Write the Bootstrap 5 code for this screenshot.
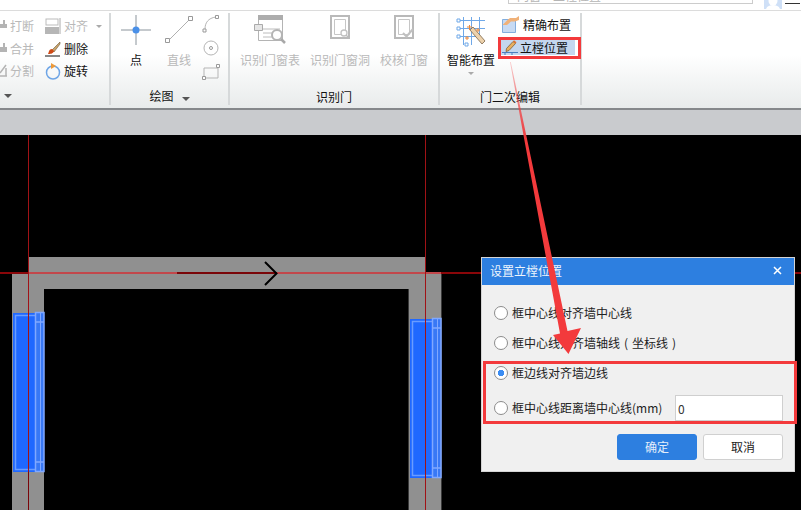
<!DOCTYPE html>
<html lang="zh-CN">
<head>
    <meta charset="UTF-8">
    <meta name="viewport" content="width=device-width, initial-scale=1.0">
    <title>设置立樘位置</title>

    <!-- Bootstrap CSS -->
    <link href="https://cdn.jsdelivr.net/npm/bootstrap@5.3.2/dist/css/bootstrap.min.css" rel="stylesheet">

    <style>
        body {
            background-color: #000;
            font-family: "Noto Sans CJK SC", "Liberation Sans", sans-serif;
            font-size: 12px;
            line-height: 16px;
            color: #111;
        }

        svg {
            display: block;
        }

        #page {
            width: 801px;
            height: 510px;
            overflow: hidden;
        }

        /* top strip */
        .top-strip {
            height: 11px;
            background-color: #fff;
            border-bottom: 1px solid #dcdcdc;
            overflow: hidden;
        }

        .search-box {
            width: 245px;
            height: 4px;
            margin-left: 508px;
            padding-left: 8px;
            border: 1px solid #ccc;
            border-top: 0;
            overflow: hidden;
            color: #b5b5b5;
        }

        .search-box span {
            display: block;
            margin-top: -12px;
        }

        .top-user {
            margin-left: 11px;
        }

        .top-dash {
            width: 15px;
            height: 1px;
            margin: 3px 0 0 3px;
            background-color: #333;
        }

        /* ribbon */
        .ribbon {
            height: 97px;
            background: linear-gradient(#fff 45%, #e8ebeb 100%);
        }

        .rb-group {
            height: 92px;
            margin-top: 2px;
            border-right: 2px solid #d6d9da;
            flex: none;
        }

        .rb-g1 { width: 111px; }
        .rb-g2 { width: 119px; }
        .rb-g3 { width: 210px; }
        .rb-g4 { width: 142px; }

        .rb-body {
            height: 76px;
            padding-top: 2px;
        }

        .rb-label {
            height: 16px;
            line-height: 16px;
            text-align: center;
        }

        .rb-g1 .rb-label,
        .rb-g2 .rb-label {
            margin-top: -1px;
        }

        .rb-large {
            text-align: center;
            flex: none;
        }

        .rb-large svg {
            margin: 0 auto;
        }

        .rb-large .rb-icon {
            height: 33px;
            margin-bottom: 4px;
        }

        .rb-small {
            height: 22.5px;
            white-space: nowrap;
        }

        .rb-small .rb-text {
            margin-left: 3px;
        }

        .rb-off {
            color: #b9b9b9;
        }

        .rb-caret {
            width: 0;
            height: 0;
            border-left: 4px solid transparent;
            border-right: 4px solid transparent;
            border-top: 4px solid #555;
            display: inline-block;
        }

        .caret-sm {
            border-left-width: 3px;
            border-right-width: 3px;
            border-top: 3px solid #aaa;
        }

        .col-cut { width: 45px; flex: none; }
        .col-cut svg { width: 7px; }

        .g2-pt { width: 50px; }
        .g2-line { width: 36px; }
        .g2-small { margin-left: 1px; width: 26px; }
        .g2-small svg { margin: 0 auto 6px; }

        .g3-body { padding-left: 10px; gap: 10px; }
        .g3-wide { width: 60px; }
        .g3-narrow { width: 48px; }

        .g4-body { padding-left: 7px; }
        .g4-smart { width: 48px; }
        .g4-side { margin-left: 5px; padding-top: 1px; }

        .side-row {
            padding-left: 2px;
            gap: 4px;
        }

        .loc-active {
            width: 75px;
            height: 15px;
            margin-top: 7px;
            padding-left: 2px;
            gap: 2px;
            background-color: #c4d7ef;
        }

        .gray-strip {
            height: 27px;
            background-color: #c9cbce;
            border-top: 2px solid #85888b;
        }

        /* overlays */
        .dlg {
            left: 481px;
            top: 257px;
            width: 314px;
            height: 215px;
            border: 1px solid #d4d4d4;
            border-radius: 0;
            background-color: #f0f0f0;
        }

        .dlg .card-header {
            height: 27px;
            padding: 0 8px 2px;
            background-color: #2d7fe0;
            border: 0;
            border-radius: 0;
            color: #eef5fd;
        }

        .dlg .card-body {
            padding: 13px 11px 11px 12px;
        }

        .dlg-row {
            height: 30px;
            gap: 4px;
        }

        .dlg-row .form-check-input {
            width: 14px;
            height: 14px;
            margin: 0;
            flex: none;
            background-color: #fff;
            border: 1px solid #8c8c8c;
        }

        .dlg-row .form-check-input:checked {
            background-image: radial-gradient(circle, #3b8cf2 0 3px, transparent 3.5px);
            background-color: #fff;
            border-color: #8c8c8c;
        }

        .dlg-row .form-check-label {
            color: #222;
        }

        /* brackets sit centred in a full character cell */
        .paren-mid {
            display: inline-block;
            width: 12px;
            text-align: center;
        }

        .dlg-gap {
            margin-top: 5px;
        }

        .dlg-input {
            width: 108px;
            height: 26px;
            min-height: 0;
            padding: 0 2px;
            border: 1px solid #cfcfcf;
            border-radius: 0;
            font-size: 12px;
            color: #333;
        }

        .dlg-foot {
            margin-top: 11px;
            gap: 6px;
        }

        .dlg-btn {
            width: 80px;
            height: 26px;
            padding: 0;
            font-size: 12px;
            line-height: 24px;
            border-radius: 3px;
        }

        .dlg-ok {
            background-color: #2d7fe0;
            border: 1px solid #2d7fe0;
            color: #e3eefb;
        }

        .dlg-cancel {
            background-color: #fff;
            border: 1px solid #d0d0d0;
            color: #222;
        }

        .mark-box {
            border: 3px solid #f33a3c;
        }

        .mark-top {
            left: 498px;
            top: 37px;
            width: 83px;
            height: 22px;
        }

        .mark-dlg {
            left: 483px;
            top: 361px;
            width: 314px;
            height: 63px;
        }

        .arrow-layer {
            left: 0;
            top: 0;
        }
    </style>
</head>
<body>
<div id="page" class="position-relative">

    <div class="top-strip d-flex">
        <div class="search-box"><span>门窗·立樘位置</span></div>
        <svg class="top-user" width="18" height="9" viewBox="0 0 18 9"><rect width="18" height="9" fill="#cfe0f7"/><circle cx="9" cy="1" r="4.5" fill="#fff"/><path d="M2 9c1-3 4-4 7-4s6 1 7 4z" fill="#fff"/></svg>
        <div class="top-dash"></div>
    </div>

    <div class="ribbon d-flex">
        <!-- group 1, cut off on the left -->
        <div class="rb-group rb-g1">
            <div class="rb-body d-flex">
                <div class="col-cut">
                    <div class="rb-small d-flex align-items-center rb-off">
                        <svg height="12" viewBox="0 0 7 12"><path d="M3 0h2v4h2v4H0V4h3z" fill="#b4b4b4"/></svg><span class="rb-text">打断</span>
                    </div>
                    <div class="rb-small d-flex align-items-center rb-off">
                        <svg height="12" viewBox="0 0 7 12"><path d="M3 0h2v4h2v5H0V4h3z" fill="#b4b4b4"/></svg><span class="rb-text">合并</span>
                    </div>
                    <div class="rb-small d-flex align-items-center rb-off">
                        <svg height="14" viewBox="0 0 7 14"><path d="M0 9 6 1M0 12h7M6 4v8" fill="none" stroke="#b4b4b4" stroke-width="1.5"/></svg><span class="rb-text">分割</span>
                    </div>
                </div>
                <div>
                    <div class="rb-small d-flex align-items-center rb-off">
                        <svg width="16" height="16" viewBox="0 0 16 16"><rect x="1" y="1" width="12" height="6" fill="#fff" stroke="#bbb"/><rect y="9" width="14" height="7" fill="#b6b6b6"/><path d="M15 0v16" stroke="#aaa"/></svg>
                        <span class="rb-text">对齐</span><i class="rb-caret caret-sm ms-2"></i>
                    </div>
                    <div class="rb-small d-flex align-items-center">
                        <svg width="16" height="16" viewBox="0 0 16 16"><path d="M15 1 7 9l2 2 6-8z" fill="#c9a46c" stroke="#6e5a3a" stroke-width=".6"/><path d="M7 8c-3 0-3 3-4 5 2 0 5 0 6-3z" fill="#cf4a16"/><path d="M0 15h15" stroke="#111"/></svg>
                        <span class="rb-text">删除</span>
                    </div>
                    <div class="rb-small d-flex align-items-center">
                        <svg width="16" height="17" viewBox="0 0 16 17"><circle cx="8" cy="9.500" r="6.500" fill="none" stroke="#6ea5e6" stroke-width="1.500"/><path d="M6 0l5 3-5 3z" fill="#ee9a3a"/></svg>
                        <span class="rb-text">旋转</span>
                    </div>
                </div>
            </div>
            <div class="rb-label d-flex ps-1 align-items-center"><i class="rb-caret"></i></div>
        </div>

        <!-- group 2 -->
        <div class="rb-group rb-g2">
            <div class="rb-body d-flex">
                <div class="rb-large g2-pt">
                    <div class="rb-icon">
                        <svg width="30" height="30" viewBox="0 0 30 30"><path d="M15 0v30M0 15h30" stroke="#8b949c"/><circle cx="15" cy="15" r="3.500" fill="#4a90e8"/></svg>
                    </div>
                    <div>点</div>
                </div>
                <div class="rb-large g2-line rb-off">
                    <div class="rb-icon">
                        <svg width="30" height="30" viewBox="0 0 30 30"><path d="M4 26 26 4" stroke="#b0b0b0"/><path d="M1.500 23.500h4v4h-4zM24.500 1.500h4v4h-4z" fill="#fff" stroke="#999"/></svg>
                    </div>
                    <div>直线</div>
                </div>
                <div class="g2-small">
                    <svg width="18" height="18" viewBox="0 0 18 18"><path d="M3 14C3 8 6 3 14 2" fill="none" stroke="#b5b5b5"/><path d="M1 14h3v3H1zM13.500 .5h3v3h-3z" fill="#fff" stroke="#999"/></svg>
                    <svg width="18" height="18" viewBox="0 0 18 18"><circle cx="9" cy="9" r="7" fill="none" stroke="#b5b5b5"/><circle cx="9" cy="9" r="1.500" fill="#fff" stroke="#999"/></svg>
                    <svg width="18" height="18" viewBox="0 0 18 18"><path d="M2 5h14v10H2z" fill="none" stroke="#b5b5b5"/><path d="M.5 13.500h3v3h-3zM14.500 1.500h3v3h-3z" fill="#fff" stroke="#999"/></svg>
                </div>
            </div>
            <div class="rb-label">绘图<i class="rb-caret ms-2"></i></div>
        </div>

        <!-- group 3 -->
        <div class="rb-group rb-g3">
            <div class="rb-body g3-body d-flex">
                <div class="rb-large g3-wide rb-off">
                    <div class="rb-icon">
                        <svg width="32" height="30" viewBox="0 0 32 30"><path d="M4.500 4.500h24v21h-24z" fill="#fff" stroke="#b4b4b4"/><path d="M4 0h25v5H4z" fill="#adadad"/><path d="M9 14h17M9 18h10M9 22h9" stroke="#bcbcbc"/><path d="M.5 9.500h8v6h-8z" fill="#e6e6e6" stroke="#aaa"/><circle cx="23" cy="20" r="5" fill="#fff" stroke="#b4b4b4" stroke-width="2"/><path d="m27 24 4 4" stroke="#a8a8a8" stroke-width="2.500"/></svg>
                    </div>
                    <div>识别门窗表</div>
                </div>
                <div class="rb-large g3-wide rb-off">
                    <div class="rb-icon">
                        <svg width="20" height="24" viewBox="0 0 20 24"><path d="M1 1h18v22H1z" fill="#fff" stroke="#b9b9b9" stroke-width="2"/><path d="M4.500 4.500h11v15h-11z" fill="none" stroke="#c6c6c6"/><circle cx="14" cy="18" r="3" fill="#fff" stroke="#c2c2c2" stroke-width="1.300"/><path d="m16 20 2 2" stroke="#bdbdbd" stroke-width="1.500"/></svg>
                    </div>
                    <div>识别门窗洞</div>
                </div>
                <div class="rb-large g3-narrow rb-off">
                    <div class="rb-icon">
                        <svg width="20" height="24" viewBox="0 0 20 24"><path d="M1 1h18v22H1z" fill="#fff" stroke="#b9b9b9" stroke-width="2"/><path d="M4.500 4.500h11v15h-11z" fill="none" stroke="#c6c6c6"/><path d="m9 18 3.500 3.500L19 14" fill="none" stroke="#c0c0c0" stroke-width="2"/></svg>
                    </div>
                    <div>校核门窗</div>
                </div>
            </div>
            <div class="rb-label">识别门</div>
        </div>

        <!-- group 4 -->
        <div class="rb-group rb-g4">
            <div class="rb-body g4-body d-flex">
                <div class="rb-large g4-smart">
                    <div class="rb-icon">
                        <svg width="30" height="32" viewBox="0 0 30 32"><path d="M2 5.500h27M2 13.500h27M2 21.500h20M7.500 2v28M15.500 2v28M23.500 2v18" stroke="#6fa8e8"/><path d="M1 4h3v3H1zM1 12h3v3H1zM1 20h3v3H1zM9 28h3v3H9z" fill="#fff" stroke="#6fa8e8"/><path d="m14 15 3-3 12 14-3 3z" fill="#edd2ac" stroke="#7c6548" stroke-width=".8"/><path d="M11 12h5M13.500 10v5M20 15h4M22 13v4M9 23h4M11 21v4" stroke="#e8873a"/></svg>
                    </div>
                    <div>智能布置</div>
                    <div class="mt-1"><i class="rb-caret caret-sm d-block mx-auto"></i></div>
                </div>
                <div class="g4-side">
                    <div class="side-row d-flex align-items-center">
                        <svg width="17" height="17" viewBox="0 0 17 17"><path d="M.5 3.500h13v13H.5z" fill="#c7daf3" stroke="#82aede"/><path d="M.5 9 6 3.500 8 2h6l3-2v4l-4 1.500H9L5 9z" fill="#f0b178"/></svg>
                        <span>精确布置</span>
                    </div>
                    <div class="loc-active d-flex align-items-center">
                        <svg width="16" height="15" viewBox="0 0 16 15"><path d="M4.500 8.500 11 1.500l2.500 2-6.500 7-3 1z" fill="#e8b060" stroke="#7d6038" stroke-width=".8"/><path d="M11 1.500l2.500 2 1-1.200-2.500-2z" fill="#e2702c"/><path d="M0 12.500h16M3 12.500V15M10 12.500V15" stroke="#4a7fc0"/></svg>
                        <span>立樘位置</span>
                    </div>
                </div>
            </div>
            <div class="rb-label">门二次编辑</div>
        </div>
    </div>

    <div class="gray-strip"></div>

    <!-- drawing canvas -->
    <svg width="801" height="375" viewBox="0 135 801 375">
        <rect x="0" y="135" width="801" height="375" fill="#000"/>
        <path d="M28 257H425V273H441V510H409V289H44V510H12V273H28Z" fill="#909090"/>
        <path d="M441.500 273V510M408.500 289V510" stroke="#3a3a3a"/>
        <path d="M0 273H28M441 273H801" stroke="#8a0609" stroke-width="2"/>
        <path d="M28 273H441" stroke="#c2474b" stroke-width="2"/>
        <path d="M177 273H277" stroke="#7a0508" stroke-width="2"/>
        <path d="M265 262l11.500 11.500L265 285" fill="none" stroke="#000" stroke-width="2"/>
        <g id="door-left">
            <rect x="13" y="313" width="31" height="159" fill="#1f68ff"/>
            <rect x="15.500" y="315.500" width="21" height="154" fill="none" stroke="#6a9cff" stroke-width="1.500"/>
            <rect x="35.500" y="312.500" width="8.500" height="159" fill="#3878f5" stroke="#80a8ff" stroke-width="1.500"/>
            <path d="M36 322h8M36 462h8" stroke="#80a8ff" stroke-width="1.500"/>
            <path d="M40.500 313v158" stroke="#80a8ff"/>
        </g>
        <use href="#door-left" x="397" y="6"/>
        <path d="M28.500 135V510M425.500 135V510" stroke="#a01216" stroke-width="1"/>
        <path d="M28.500 472V510" stroke="#7a0508"/>
    </svg>

    <!-- dialog -->
    <div class="dlg card position-absolute">
        <div class="card-header d-flex align-items-center justify-content-between">
            <span>设置立樘位置</span>
            <svg width="9" height="9" viewBox="0 0 9 9" class="me-1"><path d="M1 1l7 7M8 1 1 8" stroke="#fff" stroke-width="1.500"/></svg>
        </div>
        <div class="card-body">
            <div class="dlg-row d-flex align-items-center">
                <input class="form-check-input" type="radio" name="pos" id="pos1">
                <label class="form-check-label" for="pos1">框中心线对齐墙中心线</label>
            </div>
            <div class="dlg-row d-flex align-items-center">
                <input class="form-check-input" type="radio" name="pos" id="pos2">
                <label class="form-check-label" for="pos2">框中心线对齐墙轴线<span class="paren-mid">(</span>坐标线<span class="paren-mid">)</span></label>
            </div>
            <div class="dlg-row d-flex align-items-center">
                <input class="form-check-input" type="radio" name="pos" id="pos3" checked>
                <label class="form-check-label" for="pos3">框边线对齐墙边线</label>
            </div>
            <div class="dlg-row dlg-gap d-flex align-items-center">
                <input class="form-check-input" type="radio" name="pos" id="pos4">
                <label class="form-check-label" for="pos4">框中心线距离墙中心线(mm)</label>
                <input type="text" class="form-control dlg-input ms-auto" value="0">
            </div>
            <div class="dlg-foot d-flex justify-content-end">
                <button type="button" class="btn dlg-btn dlg-ok">确定</button>
                <button type="button" class="btn dlg-btn dlg-cancel">取消</button>
            </div>
        </div>
    </div>

    <!-- annotations drawn on top of the screenshot -->
    <div class="mark-box mark-top position-absolute"></div>
    <div class="mark-box mark-dlg position-absolute"></div>
    <svg class="arrow-layer position-absolute" width="801" height="510" viewBox="0 0 801 510">
        <defs>
            <linearGradient id="arrowFade" x1="0" y1="62" x2="0" y2="140" gradientUnits="userSpaceOnUse">
                <stop offset="0" stop-color="#f33a3c" stop-opacity=".25"/>
                <stop offset="1" stop-color="#f33a3c"/>
            </linearGradient>
        </defs>
        <path d="M510 62 510.800 62 567.500 331 581 328 568.500 354 553 335 560 333.500Z" fill="url(#arrowFade)"/>
    </svg>
</div>

<script src="https://cdn.jsdelivr.net/npm/bootstrap@5.3.2/dist/js/bootstrap.bundle.min.js"></script>
</body>
</html>
